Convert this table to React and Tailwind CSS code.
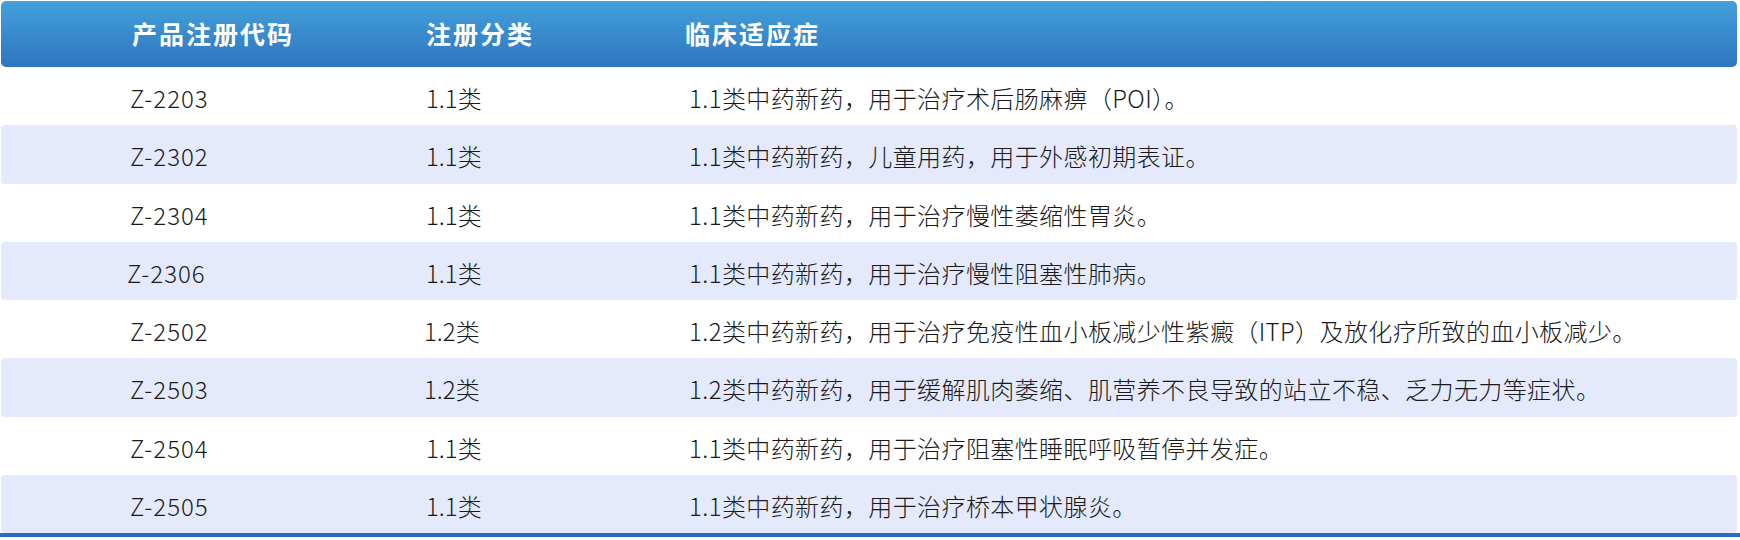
import React from "react";

const rows = [
  ["Z-2203", "1.1类", "1.1类中药新药，用于治疗术后肠麻痹（POI）。", 0, 0],
  ["Z-2302", "1.1类", "1.1类中药新药，儿童用药，用于外感初期表证。", 0, 0],
  ["Z-2304", "1.1类", "1.1类中药新药，用于治疗慢性萎缩性胃炎。", 0, 0],
  ["Z-2306", "1.1类", "1.1类中药新药，用于治疗慢性阻塞性肺病。", 1, 0],
  ["Z-2502", "1.2类", "1.2类中药新药，用于治疗免疫性血小板减少性紫癜（ITP）及放化疗所致的血小板减少。", 0, 1],
  ["Z-2503", "1.2类", "1.2类中药新药，用于缓解肌肉萎缩、肌营养不良导致的站立不稳、乏力无力等症状。", 0, 1],
  ["Z-2504", "1.1类", "1.1类中药新药，用于治疗阻塞性睡眠呼吸暂停并发症。", 0, 0],
  ["Z-2505", "1.1类", "1.1类中药新药，用于治疗桥本甲状腺炎。", 0, 0],
];

export default function App() {
  return (
    <div
      className="w-[1740px] h-[540px] bg-white overflow-hidden"
      style={{ fontFamily: '"Noto Sans CJK SC", "Noto Sans", sans-serif' }}
    >
      <div className="pt-[1px] pl-[1px] pr-[3px]">
        <div className="flex items-center h-[66px] rounded-[5px] bg-gradient-to-b from-[#43a1db] to-[#2f75bf] text-white font-bold text-[25px] tracking-[2px]">
          <div className="w-[425px] pl-[131px] box-border">产品注册代码</div>
          <div className="w-[259px]">注册分类</div>
          <div className="flex-1">临床适应症</div>
        </div>
        {rows.map((r, i) => (
          <div
            key={r[0]}
            className={
              "flex items-center h-[58.25px] rounded-[4px] text-[24px] font-light text-[#1a1a1a] pt-[4px] box-border " +
              (i % 2 === 1 ? "bg-[#e4eafc]" : "bg-white")
            }
          >
            <div className={"w-[425px] box-border tracking-[1px] " + (r[3] ? "pl-[126px]" : "pl-[129px]")}>{r[0]}</div>
            <div className="w-[263px] box-border">
              <span className={r[4] ? "-ml-[2px]" : ""}>{r[1]}</span>
            </div>
            <div className="flex-1 tracking-[0.4px]">{r[2]}</div>
          </div>
        ))}
      </div>
      <div className="h-[4px] bg-[#2b6cc0]" />
    </div>
  );
}
